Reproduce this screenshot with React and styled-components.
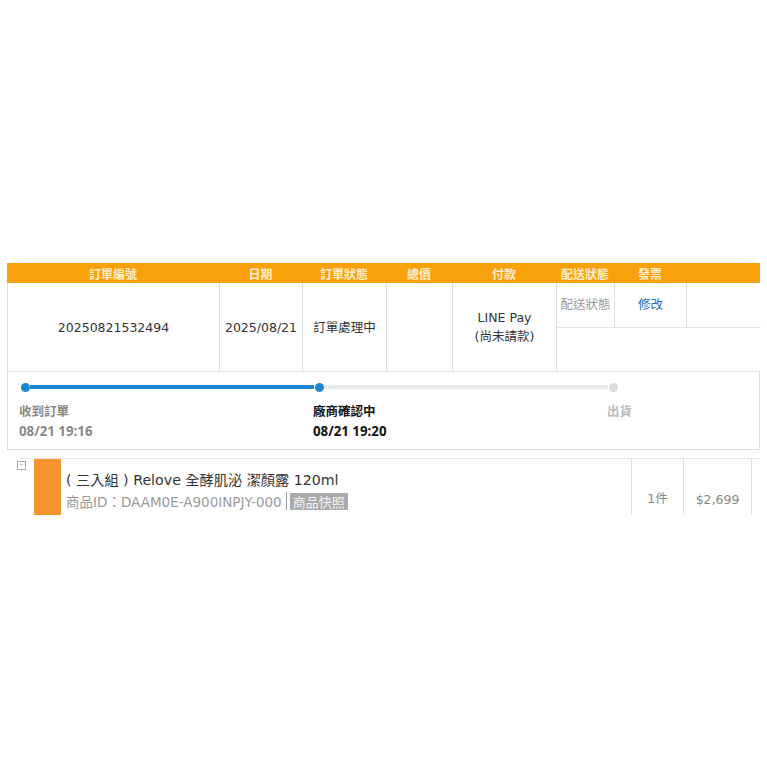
import styled, { createGlobalStyle } from 'styled-components';

const Global = createGlobalStyle`
  body {
    margin: 0;
    background: #fff;
    font-family: "DejaVu Sans", "Noto Sans CJK TC", sans-serif;
    color: #333;
  }
`;

const cols = '212px 83px 84px 66px 104px 58px 72px 74px';

const Page = styled.div`
  padding: 263px 7px 0 7px;
  width: 753px;
`;

const HeadRow = styled.div`
  display: grid;
  grid-template-columns: ${cols};
  height: 20px;
  background: #f9a10d;
`;

const HeadCell = styled.div`
  display: flex;
  align-items: center;
  justify-content: center;
  font-family: "Noto Sans CJK TC", sans-serif;
  font-size: 12px;
  font-weight: 700;
  color: #ffedcc;
`;

const BodyRow = styled.div`
  display: grid;
  grid-template-columns: ${cols};
  height: 89px;
  border-left: 1px solid #ddd;
  border-bottom: 1px solid #e2e2e2;
  box-sizing: border-box;
`;

const Cell = styled.div`
  display: flex;
  flex-direction: column;
  align-items: center;
  justify-content: center;
  border-right: 1px solid #ddd;
  font-size: 12.5px;
  line-height: 19px;
  color: #333;
  text-align: center;
  white-space: nowrap;
`;

const ShipArea = styled.div`
  grid-column: 6 / span 3;
  border-left: 1px solid #ddd;
  margin-left: -1px;
`;

const ShipRow = styled.div`
  display: grid;
  grid-template-columns: 58px 72px 74px;
  height: 44px;
  border-bottom: 1px solid #e6e6e6;
`;

const ShipCell = styled.div`
  display: flex;
  align-items: center;
  justify-content: center;
  border-right: ${p => (p.$last ? 'none' : '1px solid #ddd')};
  font-family: "Noto Sans CJK TC", sans-serif;
  font-size: 12.5px;
  padding-bottom: 4px;
  color: ${p => p.$color || '#999'};
`;

const Timeline = styled.div`
  height: 78px;
  border: 1px solid #ddd;
  border-top: none;
  display: flex;
  padding: 10px 0 0 12px;
  box-sizing: border-box;
`;

const Step = styled.div`
  width: ${p => (p.$last ? 'auto' : '294px')};
  display: flex;
  flex-direction: column;
`;

const Track = styled.div`
  display: flex;
  align-items: center;
  height: 10px;
`;

const Dot = styled.div`
  width: 9px;
  height: 9px;
  border-radius: 50%;
  margin-left: 1px;
  background: ${p => (p.$on ? '#1f86d1' : '#dcdcdc')};
  flex: none;
`;

const Bar = styled.div`
  flex: 1;
  height: 4px;
  background: ${p => (p.$on ? '#1f86d1' : '#e8e8e8')};
`;

const StepName = styled.div`
  margin: 11px 0 0 -1px;
  font-family: "Open Sans", "Noto Sans CJK TC", sans-serif;
  font-size: 12.5px;
  font-weight: 700;
  line-height: 17px;
  color: ${p => p.$color};
`;

const StepTime = styled.div`
  margin: 3px 0 0 -1px;
  font-family: "Open Sans", "Noto Sans CJK TC", sans-serif;
  font-size: 13.3px;
  font-weight: 700;
  line-height: 17px;
  color: ${p => p.$color};
`;

const Product = styled.div`
  margin: 8px 0 0 13px;
  border-top: 1px solid #e6e6e6;
  display: flex;
  height: 56px;
`;

const Toggle = styled.div`
  width: 14px;
  display: flex;
  justify-content: flex-start;
`;

const MinusBox = styled.div`
  width: 7px;
  height: 7px;
  margin: 2px 0 0 -3px;
  border: 1px solid #aaa;
  font-size: 8px;
  line-height: 6px;
  color: #888;
  text-align: center;
`;

const Thumb = styled.div`
  width: 27px;
  height: 56px;
  background: #f8942e;
  flex: none;
`;

const Info = styled.div`
  flex: 1;
  padding: 11px 0 0 5px;
`;

const Title = styled.div`
  font-size: 14.2px;
  line-height: 20px;
  color: #333;
  white-space: nowrap;
`;

const Meta = styled.div`
  display: flex;
  align-items: center;
  font-size: 13.5px;
  color: #999;
  white-space: nowrap;
  margin-top: 1px;
`;

const Divider = styled.span`
  width: 1px;
  height: 18px;
  background: #999;
  margin: 0 3px 0 4px;
`;

const Badge = styled.span`
  background: #aaa;
  color: #f2f2f2;
  font-family: "Noto Sans CJK TC", sans-serif;
  font-size: 13px;
  line-height: 17px;
  padding: 0 3px;
`;

const NumCell = styled.div`
  width: ${p => p.$w}px;
  border-left: 1px solid #ddd;
  border-right: ${p => (p.$end ? '1px solid #ddd' : 'none')};
  display: flex;
  align-items: flex-end;
  justify-content: center;
  padding-bottom: 8px;
  box-sizing: border-box;
  font-size: 12.5px;
  color: #888;
`;

const steps = [
  { name: '收到訂單', time: '08/21 19:16', color: '#888', on: true, next: true },
  { name: '廠商確認中', time: '08/21 19:20', color: '#111', on: true, next: false },
  { name: '出貨', time: '', color: '#bbb', on: false, last: true },
];

const heads = ['訂單編號', '日期', '訂單狀態', '總價', '付款', '配送狀態', '發票', ''];

export default function App() {
  return (
    <Page>
      <Global />
      <HeadRow>
        {heads.map((h, i) => <HeadCell key={i}>{h}</HeadCell>)}
      </HeadRow>
      <BodyRow>
        <Cell>20250821532494</Cell>
        <Cell>2025/08/21</Cell>
        <Cell>訂單處理中</Cell>
        <Cell />
        <Cell>
          <div>LINE Pay</div>
          <div>(尚未請款)</div>
        </Cell>
        <ShipArea>
          <ShipRow>
            <ShipCell>配送狀態</ShipCell>
            <ShipCell $color="#2a6fb0">修改</ShipCell>
            <ShipCell $last />
          </ShipRow>
        </ShipArea>
      </BodyRow>
      <Timeline>
        {steps.map(s => (
          <Step key={s.name} $last={s.last}>
            <Track>
              <Dot $on={s.on} />
              {!s.last && <Bar $on={s.next} />}
            </Track>
            <StepName $color={s.color}>{s.name}</StepName>
            {s.time && <StepTime $color={s.color}>{s.time}</StepTime>}
          </Step>
        ))}
      </Timeline>
      <Product>
        <Toggle>
          <MinusBox>-</MinusBox>
        </Toggle>
        <Thumb />
        <Info>
          <Title>( 三入組 ) Relove 全酵肌泌 潔顏露 120ml</Title>
          <Meta>
            商品ID：DAAM0E-A900INPJY-000
            <Divider />
            <Badge>商品快照</Badge>
          </Meta>
        </Info>
        <NumCell $w={52}>1件</NumCell>
        <NumCell $w={69} $end>$2,699</NumCell>
        <div style={{ width: 8 }} />
      </Product>
    </Page>
  );
}
